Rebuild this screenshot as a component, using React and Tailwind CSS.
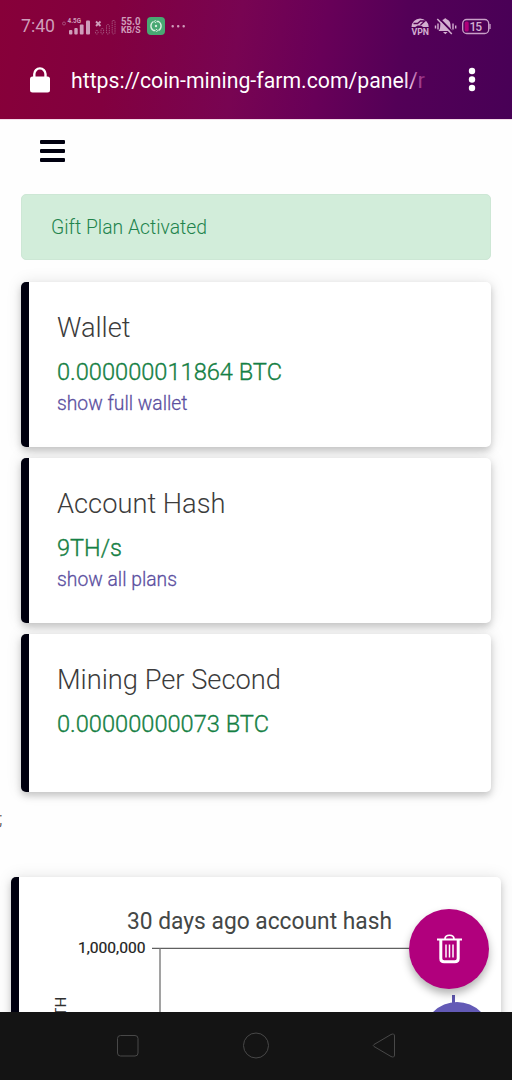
const stats = [
    { title: "Wallet", value: "0.000000011864 BTC", link: "show full wallet", height: "h-[165px]", titleWidth: 73.5, valueWidth: 225, linkWidth: 130.5 },
    { title: "Account Hash", value: "9TH/s", link: "show all plans", height: "h-[165px]", titleWidth: 168.5, valueWidth: 65, linkWidth: 120 },
    { title: "Mining Per Second", value: "0.00000000073 BTC", link: null, height: "h-[158px]", titleWidth: 224, valueWidth: 212, linkWidth: 0 },
];

// Single line of text fitted to a given width
const Line = ({ text, width, height, baseline, className }) => (
    <svg width={width + 4} height={height} className="block overflow-visible">
        <text x="0" y={baseline} textLength={width} lengthAdjust="spacingAndGlyphs" className={className}>
            {text}
        </text>
    </svg>
);

const SignalIcons = () => (
    <svg width="56" height="20" viewBox="60 14 56 20" className="ml-[5px] block" fill="#cf9dba">
        <circle cx="64" cy="21.5" r="1.5" fill="none" stroke="#a85480" strokeWidth="0.9" />
        <text x="67.5" y="20.8" textLength="13.500" lengthAdjust="spacingAndGlyphs" className="text-[6.500px] font-bold">4.5G</text>
        <rect x="69" y="28" width="3.4" height="4.5" rx="1" />
        <rect x="74.3" y="26" width="3.4" height="6.5" rx="1" />
        <rect x="79.8" y="22.5" width="3.8" height="10" rx="1" />
        <rect x="86" y="18.5" width="4" height="14" rx="1" />
        <path d="M96 19.500l4.500 4.500M100.500 19.500l-4.500 4.500" stroke="#cf9dba" strokeWidth="1.800" />
        <g fill="none" stroke="#a4517c" strokeWidth="1" strokeDasharray="1.4 0.8">
            <rect x="95.500" y="28.500" width="2.600" height="3.500" rx="1" />
            <rect x="101" y="26.500" width="2.600" height="5.500" rx="1" />
            <rect x="106.500" y="22.500" width="2.800" height="9.500" rx="1" />
            <rect x="112.200" y="18.500" width="2.800" height="13.500" rx="1" />
        </g>
    </svg>
);

const StatusBar = () => (
    <div className="flex h-[50px] items-center pt-px pl-[21px] text-[#cf9dba]">
        <Line text="7:40" width={34} height={20} baseline={16} className="fill-[#cf9dba] text-[18px]" />
        <div className="-ml-1"><SignalIcons /></div>
        <div className="ml-[5px] flex w-5 flex-col">
            <Line text="55.0" width={19.5} height={8} baseline={7.5} className="fill-[#cf9dba] text-[10px] font-bold" />
            <Line text="KB/S" width={19.5} height={9} baseline={8} className="fill-[#cf9dba] text-[9.500px] font-bold" />
        </div>
        <svg width="18" height="18" className="ml-[6px]">
            <rect width="18" height="18" rx="4" fill="#48a873" />
            <g fill="none" stroke="#d9eee1" strokeWidth="1.400">
                <path d="M6.500 4.500A5.200 5.200 0 0 0 6.500 13.500h2M11.500 13.500A5.200 5.200 0 0 0 11.500 4.500h-2" />
                <path d="M8.700 3l-1.500 1.500 1.800 1.500M9.300 15l1.500-1.500-1.800-1.500" strokeWidth="1" />
            </g>
            <circle cx="9" cy="9" r="1.200" fill="#d9eee1" />
        </svg>
        <svg width="16" height="4" className="ml-[6px]" fill="#cf9dba">
            <rect x="0.500" y="1" width="2.400" height="2.400" rx="1" />
            <rect x="6" y="1" width="2.400" height="2.400" rx="1" />
            <rect x="11.500" y="1" width="2.400" height="2.400" rx="1" />
        </svg>
        <svg width="82" height="20" viewBox="410 15 82 20" className="mr-5 ml-auto" fill="#d3afd0">
            <path d="M411.500 26a8.500 8.500 0 0 1 17.200 0h-5.500l-2.500-1.500h-3l-2.500 1.500z" />
            <path d="M413.500 22.500h4l3-2.500h4.500l-4.500 4" fill="none" stroke="#560056" strokeWidth="1.300" />
            <text x="411.500" y="34.200" textLength="17.500" lengthAdjust="spacingAndGlyphs" className="text-[9.500px] font-bold">VPN</text>
            <path d="M438.500 30c1.800-2 1.700-4 1.800-6.500.2-3 2-4.800 3.700-5.200q1.300-2.300 2.600 0c2 .6 3.700 2.500 3.900 5.200.1 2.500.2 4.500 2 6.500zM443 31h4.600l-2.300 2.300z" />
            <path d="M438.500 16.800l14.500 15" stroke="#500056" strokeWidth="2" />
            <path d="M437.300 18l14.500 15" stroke="#d3afd0" strokeWidth="1.500" />
            <path d="M435.500 24.500v3M438 22.500v6M453 22.500v6M455.700 24.500v3" stroke="#d3afd0" strokeWidth="1.400" />
            <rect x="462.700" y="18.500" width="26" height="14" rx="4" fill="none" stroke="#c9a0c8" strokeWidth="1.300" />
            <rect x="464.700" y="20.500" width="4" height="10" rx="1.500" fill="#b0007a" />
            <path d="M490 23v5" stroke="#c9a0c8" strokeWidth="1.300" />
            <text x="469.500" y="29.800" textLength="12.500" className="text-[12px] font-medium">15</text>
        </svg>
    </div>
);

const AddressBar = () => (
    <div className="flex h-[69px] items-start pt-4 pl-[29px]">
        <svg width="22" height="28" fill="white">
            <path d="M5.300 11V8a5.600 5.600 0 0 1 11.200 0v3" fill="none" stroke="white" strokeWidth="2.400" />
            <rect x="1" y="10.500" width="20" height="16" rx="2.500" />
        </svg>
        <svg width="360" height="30" className="ml-5 overflow-visible">
            <defs>
                <linearGradient id="urlFade" gradientUnits="userSpaceOnUse" x1="330" y1="0" x2="357" y2="0">
                    <stop offset="0" stopColor="#fff" />
                    <stop offset="0.350" stopColor="#eecbe4" />
                    <stop offset="0.600" stopColor="#b65099" />
                    <stop offset="1" stopColor="#75106a" />
                </linearGradient>
            </defs>
            <text x="0" y="22" textLength="354" lengthAdjust="spacingAndGlyphs" fill="url(#urlFade)" className="text-[22.500px]">
                https://coin-mining-farm.com/panel/r
            </text>
        </svg>
        <svg width="8" height="26" className="mt-px ml-[37px]" fill="white">
            <circle cx="4" cy="4" r="3.200" />
            <circle cx="4" cy="12.500" r="3.200" />
            <circle cx="4" cy="21" r="3.200" />
        </svg>
    </div>
);

const StatCard = ({ item }) => (
    <section className={`${item.height} rounded-[5px] border-l-[8px] border-[#00000f] bg-white pt-[28px] pl-[28px] shadow-[0_4px_7px_rgba(0,0,0,0.18),0_0_16px_rgba(0,0,0,0.1)]`}>
        <h2>
            <Line text={item.title} width={item.titleWidth} height={34} baseline={26.5} className="fill-[#3c3c3c] text-[27px] font-light" />
        </h2>
        <p className="mt-3">
            <Line text={item.value} width={item.valueWidth} height={29} baseline={23.7} className="fill-[#158044] stroke-[#158044] text-[24px] font-light [stroke-width:0.35px]" />
        </p>
        {item.link && (
            <a href="#" className="mt-1 block">
                <Line text={item.link} width={item.linkWidth} height={24} baseline={21.3} className="fill-[#5b4f9f] stroke-[#5b4f9f] text-[20px] font-light [stroke-width:0.3px]" />
            </a>
        )}
    </section>
);

const HashChart = () => (
    <section className="mx-[11px] h-[300px] rounded-[5px] border-l-[8px] border-[#00000f] bg-white shadow-[0_4px_7px_rgba(0,0,0,0.18),0_0_16px_rgba(0,0,0,0.1)]">
        <svg width="482" height="300" viewBox="19 877 482 300">
            <text x="127" y="929" textLength="265" lengthAdjust="spacingAndGlyphs" fill="#444746" className="text-[23px]">
                30 days ago account hash
            </text>
            <text x="78" y="953" textLength="67.500" lengthAdjust="spacingAndGlyphs" fill="#202020" stroke="#202020" strokeWidth="0.200" className="text-[15.500px]">
                1,000,000
            </text>
            <path d="M152 948.300H456" stroke="#606060" strokeWidth="1.300" />
            <path d="M160 948V1150" stroke="#707070" strokeWidth="1.300" />
            <text transform="translate(66 1016.500) rotate(-90)" fill="#303030" className="text-[15px]">TH</text>
            <path d="M453.500 995v12" stroke="#5f57b0" strokeWidth="3" />
            <circle cx="457" cy="1035.500" r="33.500" fill="#635ab6" />
        </svg>
    </section>
);

const DeleteButton = () => (
    <button aria-label="Delete" className="absolute top-[909px] left-[409px] flex size-20 items-center justify-center rounded-full bg-[#b1007d] shadow-[0_5px_9px_rgba(0,0,0,0.3)]">
        <svg width="26" height="30" viewBox="0 0 26 30" fill="none" stroke="white" className="translate-x-[0.5px]">
            <path d="M.5 5.500h25" strokeWidth="2.200" />
            <path d="M8.500 5c0-5 9-5 9 0" strokeWidth="1.700" />
            <path d="M4.300 6v18.500q0 3.300 3.300 3.300h10.800q3.300 0 3.300-3.300V6" strokeWidth="3" />
            <path d="M9.500 10.500v13M13 10.500v13M16.500 10.500v13" strokeWidth="1.500" />
        </svg>
    </button>
);

const NavBar = () => (
    <nav className="flex h-[68px] shrink-0 items-center justify-center gap-[102px] bg-[#141414]">
        <svg width="26" height="26" fill="none" stroke="#484848">
            <rect x="2.500" y="2.500" width="20.500" height="20.500" rx="3" />
        </svg>
        <svg width="26" height="26" fill="none" stroke="#484848" className="overflow-visible">
            <circle cx="13" cy="12.500" r="12.500" />
        </svg>
        <svg width="26" height="26" fill="none" stroke="#484848" strokeLinejoin="round" className="overflow-visible">
            <path d="M3 11.500 20 1.500Q23.500 0 23.500 3V22Q23.500 25 20 23.500L3 13.500Q1.500 12.500 3 11.500z" />
        </svg>
    </nav>
);

const App = () => {
    return (
        <div className="relative flex h-[1080px] w-[512px] flex-col overflow-hidden bg-[#fefefe] font-['Roboto',sans-serif]">
            <header className="h-[119px] shrink-0 bg-[linear-gradient(98deg,#870039_0%,#82003f_22%,#780452_46%,#680058_62%,#530057_78%,#480056_100%)]">
                <StatusBar />
                <AddressBar />
            </header>

            <main className="flex min-h-0 flex-1 flex-col overflow-hidden border-t border-[#f4dce9]">
                {/* Menu toggle */}
                <button aria-label="Menu" className="mt-5 ml-10 flex w-[25px] flex-col gap-[5px]">
                    <span className="h-1 w-full rounded-[1px] bg-[#00000f]" />
                    <span className="h-1 w-full rounded-[1px] bg-[#00000f]" />
                    <span className="h-1 w-full rounded-[1px] bg-[#00000f]" />
                </button>

                <div className="mx-[21px] mt-8 h-[66px] shrink-0 rounded-[5px] border border-[#cde7d5] bg-[#d2edda] pt-5 pl-[29px]">
                    <Line text="Gift Plan Activated" width={156} height={24} baseline={19} className="fill-[#21834c] text-[20px] font-light" />
                </div>

                <div className="mx-[21px] mt-[22.4px] flex flex-col gap-[10.6px]">
                    {stats.map((item) => (
                        <StatCard key={item.title} item={item} />
                    ))}
                </div>

                <p className="mt-[15px] mb-[46.4px] -ml-px h-6 text-[18px] leading-6 font-light text-[#444]">;</p>

                <HashChart />
            </main>

            <NavBar />
            <DeleteButton />
        </div>
    );
};

export default App;
